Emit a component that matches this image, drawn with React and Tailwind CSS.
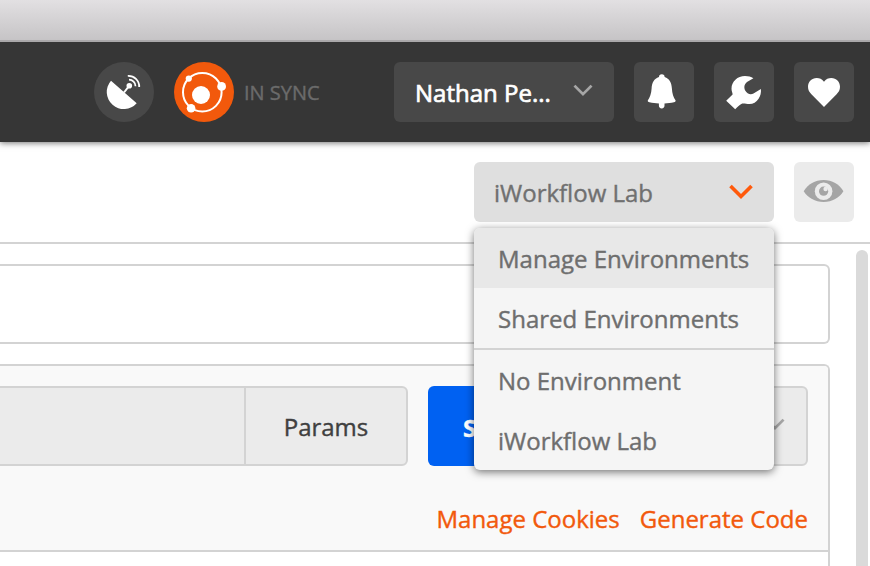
const font = "font-['Open_Sans','Noto_Sans',sans-serif]";

function Tile({ children, className }) {
  return (
    <div className={`size-[60px] shrink-0 ${className}`}>
      <svg viewBox="0 0 60 60" className="block size-full">{children}</svg>
    </div>
  );
}

function Chevron({ className, width = 3.4, size }) {
  return (
    <svg viewBox="0 0 24 16" className={`shrink-0 ${size} ${className}`} fill="none" stroke="currentColor" strokeWidth={width}>
      <path d="M1.5 2 12 12.5 22.5 2" />
    </svg>
  );
}

function Header() {
  return (
    <header className="relative z-10 flex h-[100px] shrink-0 items-center bg-[#363636] pl-[94px] pr-4 shadow-[0_1px_6px_rgba(0,0,0,0.55)]">
      <Tile className="rounded-full bg-[#484848]">
        <path d="M17 18.7 42.7 41.3A17.1 17.1 0 0 1 17 18.7Z" fill="#fff" />
        <circle cx="35.3" cy="23.7" r="2.8" fill="#fff" />
        <g fill="none" stroke="#fff">
          <path d="M35.3 23.7 30 30.5" strokeWidth="2" />
          <path d="M35 17.6A6.6 6.6 0 0 1 41.5 24.3" strokeWidth="1.8" />
          <path d="M33.8 13.9A10.8 10.8 0 0 1 45.2 25" strokeWidth="1.8" />
        </g>
      </Tile>
      <Tile className="ml-5 rounded-full bg-[#f2590c]">
        <circle cx="28.3" cy="30.2" r="19.3" fill="none" stroke="#fff" strokeWidth="2" />
        <g fill="#fff">
          <circle cx="27" cy="33" r="9" />
          <circle cx="14.8" cy="16.6" r="3.1" />
          <circle cx="47.6" cy="24.4" r="4.4" />
          <circle cx="17.1" cy="46.3" r="4.3" />
        </g>
      </Tile>
      <span className="ml-2.5 whitespace-nowrap pt-0.5 text-[20px] leading-[30px] text-[#6b6b6b]">IN SYNC</span>
      <div className="ml-auto flex gap-5">
        <div className="flex h-[60px] w-[220px] items-center justify-between rounded-md bg-[#484848] pl-[21px] pr-[21px]">
          <span className="whitespace-nowrap pt-0.5 text-[24px] text-white [-webkit-text-stroke:0.7px_currentColor]">Nathan Pe...</span>
          <Chevron className="mb-1 text-[#a6a6a6]" size="h-[13px] w-5" />
        </div>
        <Tile className="rounded-md bg-[#484848]">
          <path fill="#fff" d="M25 15a2.8 2.8 0 0 1 5.600 0C35.500 16.500 37.600 21 37.900 26.500c.2 5 1.600 9 3.600 11.700.6 1-.4 1.600-1.600 2-3 .8-6 1.100-9.400 1.200v2.200a2.800 2.800 0 0 1-5.600 0v-2.200c-3.400-.1-6.400-.4-9.400-1.200-1.200-.4-2.200-1-1.600-2C15.800 35.500 17.400 31.500 17.600 26.500 17.900 21 20 16.500 25 15Z" />
        </Tile>
        <Tile className="rounded-md bg-[#484848]">
          <path fill="#fff" d="M12.200 38.800 18.600 32.400C18.700 30.800 17.500 29.500 17.500 26.700 17.500 19.500 23.500 14 31 14 34.500 14 37 14.900 39.400 16.300L33 20C30 22.200 29.800 25.800 31.200 28.500 33 31.800 36.500 33.200 39.500 31.500L46.900 27C47.300 30.500 46.500 34 44.600 36.800 42.300 40.300 39.200 42 35.500 42 32.500 42 30.500 41.200 28.300 41.500 26.800 42 23.800 44.600 21.200 47.200Z" />
        </Tile>
        <Tile className="rounded-md bg-[#484848]">
          <path fill="#fff" d="M30 19.700C32 17 34.500 16 37.300 16c5 0 8.700 3.700 8.700 8.700 0 3.200-1.300 5.300-3.400 7.500L30 45 17.400 32.200C15.300 30 14 27.900 14 24.700 14 19.700 17.700 16 22.700 16c2.800 0 5.300 1 7.300 3.700Z" />
        </Tile>
      </div>
    </header>
  );
}

function MenuItem({ children, className }) {
  return <div className={`flex items-center whitespace-nowrap pl-6 ${className}`}>{children}</div>;
}

function EnvironmentBar() {
  return (
    <div className="flex h-[102px] shrink-0 items-start justify-end gap-5 border-b-2 border-[#d3d3d3] pr-4 pt-5">
      <div className="relative">
        <div className="flex h-[60px] w-[300px] items-center justify-between rounded-md bg-[#dfdfdf] px-5 text-[#707070]">
          <span className="whitespace-nowrap pt-0.5">iWorkflow Lab</span>
          <Chevron className="text-[#ff5a0c]" size="h-4 w-[26px]" width={3.6} />
        </div>
        <div className="absolute left-0 top-[66px] z-20 w-[300px] rounded-md bg-[#f5f5f5] text-[#6e6e6e] shadow-[0_2px_8px_rgba(0,0,0,0.55)]">
          <MenuItem className="h-[60px] rounded-t-md bg-[#e8e8e8] pt-0.5">Manage Environments</MenuItem>
          <MenuItem className="h-[62px] border-b-2 border-[#d3d3d3] pt-0.5">Shared Environments</MenuItem>
          <MenuItem className="h-[62px]">No Environment</MenuItem>
          <MenuItem className="h-[58px]">iWorkflow Lab</MenuItem>
        </div>
      </div>
      <Tile className="rounded-md bg-[#ebebeb]">
        <path fill="#a5a5a5" d="M9.700 29.300C14 22 21 18 29.600 18s15.600 4 19.800 11.300C45.200 36 38.200 40 29.600 40S14 36 9.700 29.300Z" />
        <circle cx="29.600" cy="29.200" r="8.800" fill="#ebebeb" />
        <circle cx="29.600" cy="29.200" r="4.600" fill="#a5a5a5" />
        <circle cx="31.600" cy="27" r="2.200" fill="#ebebeb" />
      </Tile>
    </div>
  );
}

function RequestBuilder() {
  return (
    <main className="flex min-h-0 flex-1">
      <div className="flex w-[830px] flex-col pt-5">
        <div className="h-20 shrink-0 rounded-r-md border-2 border-l-0 border-[#d3d3d3] bg-white" />
        <section className="mt-5 flex flex-1 flex-col rounded-tr-md border-r-2 border-t-2 border-[#d3d3d3]">
          <div className="h-[186px] rounded-tr-sm border-b-2 border-[#d3d3d3] bg-[#f9f9f9] pr-5 pt-5">
            <div className="flex h-20">
              <div className="w-[244px] border-y-2 border-[#d3d3d3] bg-[#ebebeb]" />
              <div className="flex w-[164px] items-center justify-center rounded-r-md border-2 border-[#d3d3d3] bg-[#ebebeb] pt-0.5 text-[#404040]">Params</div>
              <div className="ml-5 flex w-[200px] items-center rounded-l-md bg-[#0061f2] pl-[35px] pt-[3px] font-bold text-white">Send</div>
              <div className="flex flex-1 items-center justify-end rounded-r-md border-2 border-[#d3d3d3] bg-[#ebebeb] pr-[21px]">
                <Chevron className="mb-1 text-[#a6a6a6]" size="h-[13px] w-5" />
              </div>
            </div>
            <div className="mt-[35px] flex justify-end gap-5 whitespace-nowrap leading-9 text-[#f2590c]">
              <span>Manage Cookies</span>
              <span>Generate Code</span>
            </div>
          </div>
        </section>
      </div>
      <div className="ml-[26px] mt-1.5 w-3 rounded-t-full bg-[#dadada]" />
    </main>
  );
}

export default function App() {
  return (
    <div className={`flex h-[566px] w-[870px] flex-col overflow-hidden bg-white text-[24px] leading-8 [-webkit-text-stroke:0.4px_currentColor] ${font}`}>
      <div className="relative z-20 h-[42px] shrink-0 border-b-2 border-[#aaa8aa] bg-linear-to-b from-[#e2e0e2] to-[#c6c4c6]" />
      <Header />
      <EnvironmentBar />
      <RequestBuilder />
    </div>
  );
}
